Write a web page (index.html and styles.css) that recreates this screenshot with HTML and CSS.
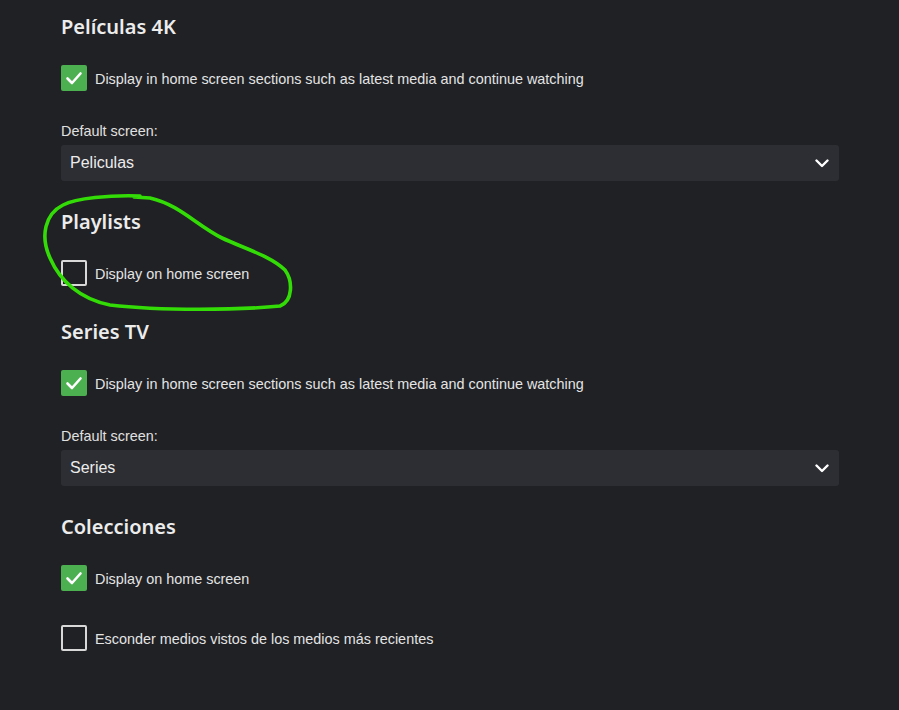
FILE: index.html
```html
<!DOCTYPE html>
<html lang="es">
<head>
<meta charset="utf-8">
<title>Home screen settings</title>
<link rel="stylesheet" href="styles.css">
</head>
<body>
<main class="page">
  <section class="lib">
    <h2 class="lib-title">Películas 4K</h2>
    <label class="check-row">
      <span class="box checked"><svg viewBox="0 0 26 26" width="26" height="26"><path d="M6.5 13.5 L11 18 L19.5 8.5" fill="none" stroke="#fff" stroke-width="2.6" stroke-linecap="round" stroke-linejoin="round"/></svg></span>
      <span class="check-label">Display in home screen sections such as latest media and continue watching</span>
    </label>
    <div class="field">
      <div class="field-label">Default screen:</div>
      <div class="select"><span>Peliculas</span><svg class="chev" viewBox="0 0 14 9" width="14" height="9"><path d="M1.5 1.5 L7 7 L12.5 1.5" fill="none" stroke="#fff" stroke-width="2.4" stroke-linecap="round" stroke-linejoin="round"/></svg></div>
    </div>
  </section>

  <section class="lib lib-check-end">
    <h2 class="lib-title">Playlists</h2>
    <label class="check-row">
      <span class="box"></span>
      <span class="check-label">Display on home screen</span>
    </label>
  </section>

  <section class="lib">
    <h2 class="lib-title">Series TV</h2>
    <label class="check-row">
      <span class="box checked"><svg viewBox="0 0 26 26" width="26" height="26"><path d="M6.5 13.5 L11 18 L19.5 8.5" fill="none" stroke="#fff" stroke-width="2.6" stroke-linecap="round" stroke-linejoin="round"/></svg></span>
      <span class="check-label">Display in home screen sections such as latest media and continue watching</span>
    </label>
    <div class="field">
      <div class="field-label">Default screen:</div>
      <div class="select"><span>Series</span><svg class="chev" viewBox="0 0 14 9" width="14" height="9"><path d="M1.5 1.5 L7 7 L12.5 1.5" fill="none" stroke="#fff" stroke-width="2.4" stroke-linecap="round" stroke-linejoin="round"/></svg></div>
    </div>
  </section>

  <section class="lib">
    <h2 class="lib-title">Colecciones</h2>
    <label class="check-row">
      <span class="box checked"><svg viewBox="0 0 26 26" width="26" height="26"><path d="M6.5 13.5 L11 18 L19.5 8.5" fill="none" stroke="#fff" stroke-width="2.6" stroke-linecap="round" stroke-linejoin="round"/></svg></span>
      <span class="check-label">Display on home screen</span>
    </label>
    <label class="check-row second">
      <span class="box"></span>
      <span class="check-label">Esconder medios vistos de los medios más recientes</span>
    </label>
  </section>
</main>
<svg class="annotation" width="899" height="710" viewBox="0 0 899 710">
  <path d="M140 196 C110 195 76 198 63 205 C45 214 40 236 50 258 C60 281 80 299 110 305 C160 311 240 310 280 306 C293 301 293 281 285 270 C271 256 243 248 222 238 C196 225 180 205 150 198 L134 197" fill="none" stroke="#33dc06" stroke-width="3.6" stroke-linecap="round" stroke-linejoin="round"/>
</svg>
</body>
</html>
```
FILE: styles.css
```css
html, body {
  margin: 0;
  padding: 0;
  background: #202124;
}
body {
  position: relative;
  width: 899px;
  height: 710px;
  overflow: hidden;
  font-family: "Liberation Sans", Arial, sans-serif;
  color: #e6e6e6;
}
.page {
  padding: 15px 60px 0 61px;
}
.lib {
  margin-bottom: 29px;
}
.lib.lib-check-end {
  margin-bottom: 34px;
}
.lib-title {
  margin: 0 0 26px 0;
  font-family: "Noto Sans", "Open Sans", sans-serif;
  font-size: 20px;
  line-height: 24px;
  font-weight: 600;
  color: #ececec;
}
.check-row {
  display: flex;
  align-items: center;
  gap: 8px;
  height: 26px;
}
.check-row.second {
  margin-top: 34px;
}
.box {
  box-sizing: border-box;
  width: 26px;
  height: 26px;
  border: 2px solid #d8d8d8;
  border-radius: 2px;
  display: flex;
  align-items: center;
  justify-content: center;
  flex: none;
}
.box.checked {
  border: none;
  background: #4caf50;
}
.box svg {
  display: block;
}
.check-label {
  font-size: 14.4px;
  line-height: 17px;
  padding-top: 2px;
  color: #e4e4e4;
}
.field {
  margin-top: 31px;
}
.field-label {
  font-size: 14.4px;
  line-height: 17px;
  color: #e0e0e0;
  margin-bottom: 5px;
  padding-top: 1px;
}
.select {
  height: 36px;
  background: #2d2e33;
  border-radius: 3px;
  display: flex;
  align-items: center;
  justify-content: space-between;
  padding: 0 9px 0 9px;
  font-size: 16px;
  color: #ececec;
}
.chev {
  display: block;
  margin-right: 1px;
}
.annotation {
  position: absolute;
  left: 0;
  top: 0;
  pointer-events: none;
}
```
